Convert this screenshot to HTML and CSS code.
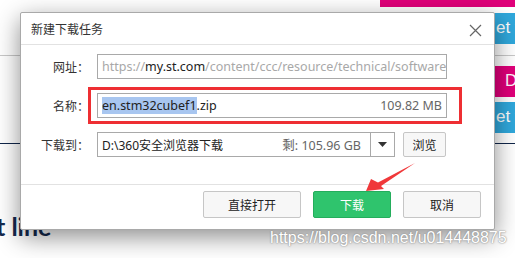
FILE: index.html
```html
<!DOCTYPE html>
<html lang="zh-CN">
<head>
    <meta charset="UTF-8">
    <title>新建下载任务</title>
    <link rel="stylesheet" href="styles.css">
</head>
<body>

<div class="page">
    <div class="page-top">
        <div class="pink-strip"></div>
    </div>
    <div class="page-head">
        <div class="side-btn blue">et f</div>
    </div>
    <div class="page-rule"></div>
    <div class="page-mid">
        <div class="side-btn pink">D</div>
        <div class="side-btn blue">et f</div>
    </div>
    <div class="page-rule dark"></div>
    <h2 class="page-title">t line</h2>
</div>

<div class="dialog">
    <div class="dialog-title">
        <span>新建下载任务</span>
        <span class="close">
            <svg width="13" height="13" viewBox="0 0 13 13"><path d="M1 1L12 12M12 1L1 12" stroke="#666" stroke-width="1.2" fill="none"/></svg>
        </span>
    </div>
    <div class="dialog-body">
        <div class="row">
            <label>网址：</label>
            <div class="field url"><span class="dim">https://</span>my.st.com<span class="dim">/content/ccc/resource/technical/software/</span></div>
        </div>
        <div class="row">
            <label>名称：</label>
            <div class="field name">
                <span><span class="sel">en.stm32cubef1</span>.zip</span>
                <span class="size">109.82 MB</span>
            </div>
            <div class="mark"></div>
        </div>
        <div class="row">
            <label>下载到：</label>
            <div class="field path">
                <span>D:\360安全浏览器下载</span>
                <span class="size">剩: 105.96 GB</span>
            </div>
            <div class="drop"><svg width="9" height="5" viewBox="0 0 9 5"><path d="M0 0H9L4.5 5Z" fill="#333"/></svg></div>
            <button class="btn small">浏览</button>
        </div>
    </div>
    <div class="dialog-foot">
        <button class="btn wide">直接打开</button>
        <button class="btn go">下载</button>
        <button class="btn">取消</button>
    </div>
</div>

<svg class="arrow" width="515" height="258" viewBox="0 0 515 258">
    <polygon points="366,191 371,179 378,182.5 415,163 381,186 384,189" fill="#f0383a"/>
</svg>

<div class="watermark">https://blog.csdn.net/u014448875</div>

</body>
</html>
```

FILE: styles.css
```css
body {
    margin: 0;
    width: 515px;
    height: 258px;
    overflow: hidden;
    background: #fff;
    font-family: "Noto Sans", "Noto Sans CJK SC", sans-serif;
    font-size: 12px;
    color: #333;
    position: relative;
}
.page-top {
    height: 7px;
    display: flex;
    justify-content: flex-end;
}
.pink-strip {
    width: 135px;
    background: #e0007a;
}
.page-head {
    height: 48px;
    display: flex;
    justify-content: flex-end;
    padding-top: 6px;
    box-sizing: border-box;
}
.side-btn {
    width: 60px;
    height: 31px;
    line-height: 30px;
    color: #fff;
    font-family: "Liberation Sans", sans-serif;
    font-size: 17px;
    padding-left: 41px;
    box-sizing: border-box;
    white-space: nowrap;
}
.blue {
    background: #30a8dc;
}
.pink {
    background: #e0007a;
    padding-left: 50px;
}
.page-rule {
    height: 1px;
    background: #c8c8c8;
}
.page-rule.dark {
    background: #10264a;
}
.page-mid {
    height: 87px;
    display: flex;
    flex-direction: column;
    align-items: flex-end;
    padding-top: 10px;
    gap: 5px;
    box-sizing: border-box;
}
.page-title {
    margin: 67px 0 0 -4px;
    font-family: "Lato", sans-serif;
    font-size: 25px;
    font-weight: 700;
    color: #14294d;
}

.dialog {
    position: absolute;
    left: 20px;
    top: 12px;
    width: 475px;
    height: 218px;
    box-sizing: border-box;
    background: #fff;
    border: 1px solid #a9a9a9;
    border-radius: 2px;
    box-shadow: 0 7px 24px rgba(0, 0, 0, 0.45);
    display: flex;
    flex-direction: column;
}
.dialog-title {
    height: 31px;
    display: flex;
    align-items: center;
    justify-content: space-between;
    padding: 0 12px 0 10px;
    border-bottom: 1px solid #e2e2e2;
    font-size: 12px;
    color: #333;
}
.close {
    display: flex;
    padding-top: 4px;
}
.dialog-body {
    height: 140px;
    box-sizing: border-box;
    padding-top: 9px;
    display: flex;
    flex-direction: column;
    gap: 14px;
    border-bottom: 1px solid #e2e2e2;
}
.row {
    display: flex;
    align-items: center;
    height: 25px;
    position: relative;
}
.row label {
    width: 68px;
    padding-right: 6px;
    text-align: right;
    margin-right: 2px;
    color: #333;
}
.field {
    height: 25px;
    box-sizing: border-box;
    border: 1px solid #a9a9a9;
    display: flex;
    align-items: center;
    justify-content: space-between;
    padding: 0 4px;
    font-size: 12.5px;
    color: #222;
    white-space: nowrap;
    overflow: hidden;
}
.url {
    width: 350px;
    justify-content: flex-start;
}
.dim {
    color: #a8a8a8;
}
.name {
    width: 350px;
}
.sel {
    background: #a8c6f0;
}
.size {
    color: #666;
}
.path {
    width: 274px;
    padding-right: 9px;
}
.path span:first-child {
    font-size: 12px;
}
.drop {
    width: 24px;
    height: 25px;
    box-sizing: border-box;
    border: 1px solid #a9a9a9;
    border-left: none;
    display: flex;
    align-items: center;
    justify-content: center;
}
.mark {
    position: absolute;
    left: 67px;
    top: -6px;
    width: 374px;
    height: 37px;
    box-sizing: border-box;
    border: 3px solid #ee2f33;
}
.btn {
    height: 27px;
    width: 78px;
    border: 1px solid #c6c6c6;
    border-radius: 2px;
    background: #f7f7f7;
    font-family: "Noto Sans CJK SC", sans-serif;
    font-size: 12px;
    color: #222;
    padding: 0;
}
.btn.small {
    width: 43px;
    height: 25px;
    margin-left: 8px;
}
.btn.wide {
    width: 98px;
}
.btn.go {
    background: #2fc46d;
    border-color: #24ad5c;
    color: #fff;
}
.dialog-foot {
    flex: 1;
    display: flex;
    justify-content: flex-end;
    align-items: flex-start;
    gap: 12px;
    padding: 6px 13px 0 0;
}

.arrow {
    position: absolute;
    left: 0;
    top: 0;
}
.watermark {
    position: absolute;
    left: 270px;
    top: 229px;
    font-family: "Liberation Sans", sans-serif;
    font-size: 16px;
    color: #fff;
    text-shadow: 0 0 2px #888, 0 0 1px #999;
}
```
